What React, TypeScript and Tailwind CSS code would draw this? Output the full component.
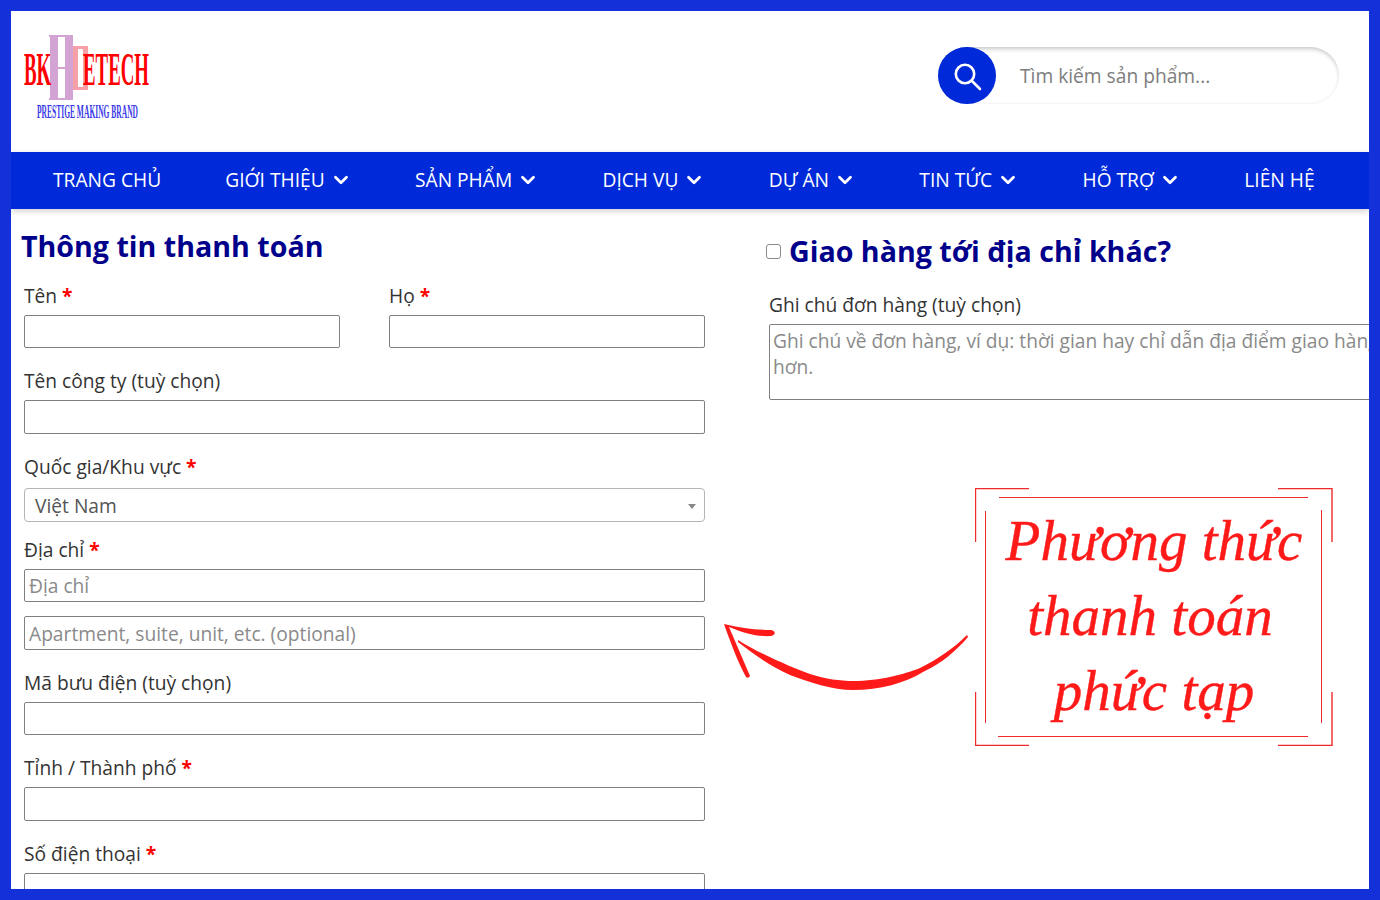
import { ChevronDown } from 'lucide-react';

const navItems = [
  { label: 'TRANG CHỦ', sub: false, cls: 'pl-[33.5px] pr-[30.5px]' },
  { label: 'GIỚI THIỆU', sub: true, cls: 'px-[33.67px]' },
  { label: 'SẢN PHẨM', sub: true, cls: 'px-[33.67px]' },
  { label: 'DỊCH VỤ', sub: true, cls: 'px-[33.67px]' },
  { label: 'DỰ ÁN', sub: true, cls: 'px-[33.67px]' },
  { label: 'TIN TỨC', sub: true, cls: 'px-[33.67px]' },
  { label: 'HỖ TRỢ', sub: true, cls: 'px-[33.67px]' },
  { label: 'LIÊN HỆ', sub: false, cls: 'px-[33.67px]' },
];

function Logo() {
  const serif = "'Liberation Serif', serif";
  return (
    <svg width="130" height="90" viewBox="0 0 130 90" className="block overflow-visible">
      {/* double E mark */}
      <path d="M25 0h24v65H25v-2h1V2h-1zM34 2v61h7V34h-7v-2h7V2z" fill="#d3a4d3" />
      <path d="M49 11h15v44H49zM54 14v38h5V14z" fill="#f7a0a8" />
      <g transform="translate(0 50) scale(0.41 1)" fill="#ff0000" fontSize="46" fontWeight="700" fontFamily={serif}>
        <text x="0" y="0">BK</text>
      </g>
      <g transform="translate(59 50) scale(0.41 1)" fill="#ff0000" fontSize="46" fontWeight="700" fontFamily={serif}>
        <text x="0" y="0">ETECH</text>
      </g>
      <text x="13" y="83" textLength="101" lengthAdjust="spacingAndGlyphs" fill="#3a3ae8" fontSize="19" fontWeight="700" fontFamily={serif}>PRESTIGE MAKING BRAND</text>
    </svg>
  );
}

function Field({ label, required, height = 'h-[33px]', placeholder }: { label: string; required?: boolean; height?: string; placeholder?: string }) {
  return (
    <div>
      <label className="block text-[19.2px] leading-[24px] text-[#333]">
        {label}
        {required && <span className="font-bold text-[#ff0000]"> *</span>}
      </label>
      <input
        placeholder={placeholder}
        className={`mt-[7px] block w-full ${height} rounded-[2px] border border-[#808080] bg-white px-1 text-[19.2px] placeholder:text-[#8a8a8a]`}
      />
    </div>
  );
}

function Callout() {
  return (
    <div className="absolute left-[964px] top-[477px] h-[258px] w-[358px]">
      <svg width="358" height="258" viewBox="0 0 358 258" className="absolute left-0 top-0" fill="none" stroke="#f02a2a">
        <path d="M54 .5H.5V54M303 .5h54V54M.5 204v53.5H54M357 204v53.5h-54" strokeWidth="1.4" />
        <path d="M24 9.5h309M23 248.5h310M10.5 23v212M346.5 22v213" strokeWidth="1" />
      </svg>
      <div className="relative flex h-full flex-col items-center pt-[15px] font-['Liberation_Serif',serif] text-[57px] italic leading-[75px] text-[#ff1a1a] [-webkit-text-stroke:0.4px_#ff1a1a]">
        <span>Phương thức</span>
        <span className="pr-[8px]">thanh toán</span>
        <span>phức tạp</span>
      </div>
    </div>
  );
}

export default function App() {
  return (
    <div className="relative h-[900px] w-[1380px] overflow-hidden border-[11px] border-[#1430d8] bg-white font-['Open_Sans',sans-serif]">
      {/* Header */}
      <div className="flex h-[141px] items-start justify-between pl-[13px] pr-[30px]">
        <div className="pt-[24px]">
          <Logo />
        </div>
        <div className="relative mt-[36px] flex h-[57px] w-[401px] items-center">
          <div className="flex h-full w-full items-center rounded-full bg-white pl-[82px] pt-[2px] text-[19.2px] text-[#7d7d7d] shadow-[inset_0_3px_4px_-1px_rgba(0,0,0,0.22),inset_0_-1px_2px_rgba(0,0,0,0.05)]">
            Tìm kiếm sản phẩm...
          </div>
          <div className="absolute left-0 top-0 flex h-[57px] w-[58px] items-center justify-center rounded-full bg-[#0029d9]">
            <svg width="30" height="30" viewBox="0 0 30 30" fill="none" stroke="#fff" strokeWidth="2.6" strokeLinecap="round">
              <circle cx="13" cy="13" r="9.2" />
              <path d="M20 20l8 8" />
            </svg>
          </div>
        </div>
      </div>

      {/* Nav */}
      <nav className="relative z-10 flex h-[57px] items-center bg-[#0029d9] pl-[8.5px] text-[19.2px] text-white shadow-[0_2px_6px_rgba(0,0,0,0.2)]">
        {navItems.map((item) => (
          <div key={item.label} className={`flex items-center whitespace-nowrap ${item.cls}`}>
            {item.label}
            {item.sub && <ChevronDown size={22} strokeWidth={3} className="-mr-[4px] ml-[5px]" />}
          </div>
        ))}
      </nav>

      {/* Form */}
      <div className="flex gap-[64px] pl-[13px]">
        <div className="w-[681px] shrink-0">
          <h1 className="-ml-[3px] mt-[17px] text-[28.6px] font-bold leading-[40px] text-[#00008b]">Thông tin thanh toán</h1>
          <div className="mt-[18px] flex gap-[49px]">
            <div className="w-[316px]"><Field label="Tên" required /></div>
            <div className="w-[316px]"><Field label="Họ" required /></div>
          </div>
          <div className="mt-[21px]"><Field label="Tên công ty (tuỳ chọn)" height="h-[34px]" /></div>
          <div className="mt-[21px]">
            <label className="block text-[19.2px] leading-[24px] text-[#333]">
              Quốc gia/Khu vực<span className="font-bold text-[#ff0000]"> *</span>
            </label>
            <div className="mt-[9px] flex h-[34px] items-center justify-between rounded-[4px] border border-[#b5b5b5] pl-[10px] pr-[8px] pt-[2px] text-[19.2px] text-[#555]">
              Việt Nam
              <span className="h-0 w-0 border-x-[4.5px] border-t-[5px] border-x-transparent border-t-[#888]" />
            </div>
          </div>
          <div className="mt-[16px]"><Field label="Địa chỉ" required placeholder="Địa chỉ" /></div>
          <input placeholder="Apartment, suite, unit, etc. (optional)" className="mt-[14px] block h-[34px] w-full rounded-[2px] border border-[#808080] px-1 text-[19.2px] placeholder:text-[#8a8a8a]" />
          <div className="mt-[21px]"><Field label="Mã bưu điện (tuỳ chọn)" /></div>
          <div className="mt-[21px]"><Field label="Tỉnh / Thành phố" required height="h-[34px]" /></div>
          <div className="mt-[21px]"><Field label="Số điện thoại" required height="h-[34px]" /></div>
        </div>

        <div className="w-[681px] shrink-0">
          <div className="mt-[22px] flex items-center">
            <span className="-ml-[3px] mr-[8px] h-[15px] w-[15px] rounded-[3px] border-[1.5px] border-[#8a8a8a] bg-white" />
            <h2 className="text-[28.6px] font-bold leading-[40px] text-[#00008b]">Giao hàng tới địa chỉ khác?</h2>
          </div>
          <label className="mt-[22px] block text-[19.2px] leading-[24px] text-[#333]">Ghi chú đơn hàng (tuỳ chọn)</label>
          <textarea
            placeholder="Ghi chú về đơn hàng, ví dụ: thời gian hay chỉ dẫn địa điểm giao hàng chi tiết hơn."
            className="mt-[7px] block h-[76px] w-full resize-none rounded-[2px] border border-[#808080] px-[3px] py-[3px] text-[19.2px] leading-[26px] placeholder:text-[#8a8a8a]"
          />
        </div>
      </div>

      {/* Arrow */}
      <svg width="260" height="80" viewBox="0 0 260 80" className="absolute left-[711px] top-[611px]" fill="#ff1a1a">
        <g transform="translate(-722 -622)">
          <path d="M724 624C740 628 756 630 771 630C776 631 776 635 771 636C756 637 744 633 729 627L750 676C749 678 747 678 746 677C738 662 731 644 724 624Z" />
          <path d="M738 640C760 654 793 668 810 674C826 679 840 681 853 681C880 681 905 674 920 668C938 659 954 648 967 635L968 637C956 651 942 663 923 672C905 683 880 690 853 690C832 690 812 683 790 675C770 666 752 653 738 642Z" />
        </g>
      </svg>

      <Callout />
    </div>
  );
}
